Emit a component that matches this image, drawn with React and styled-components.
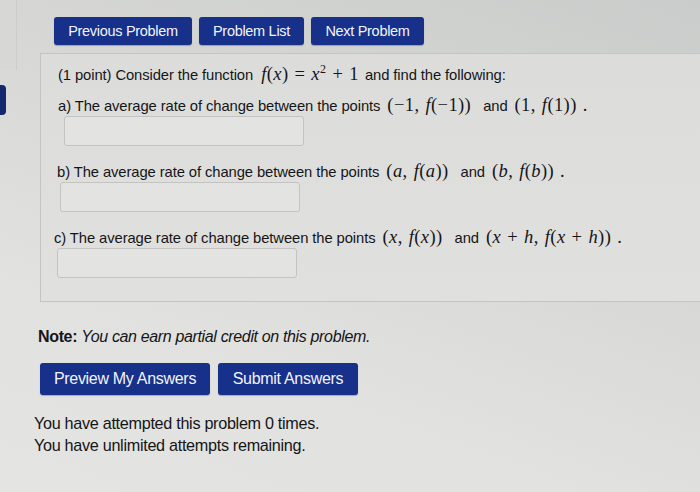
import React from 'react';
import styled, { createGlobalStyle } from 'styled-components';

const GlobalStyle = createGlobalStyle`
    html, body {
        margin: 0;
        padding: 0;
        height: 100%;
    }
    body {
        background: linear-gradient(200deg, #c9ccca 0%, #d6d7d5 35%, #e1e1df 70%, #e4e4e2 100%);
        font-family: "Liberation Sans", Arial, sans-serif;
        color: #151517;
        overflow: hidden;
    }
`;

const Page = styled.div`
    display: flex;
    width: 700px;
    height: 492px;
`;

const Rail = styled.div`
    width: 40px;
    flex: none;
    display: flex;
    flex-direction: column;
`;

const RailTop = styled.div`
    width: 16px;
    height: 70px;
    background: #d7d8d6;
    border-right: 1px solid #cbcccb;
`;

const RailTab = styled.div`
    margin-top: 15px;
    width: 6px;
    height: 30px;
    background: #13286e;
    border-radius: 0 4px 4px 0;
`;

const Main = styled.div`
    flex: 1;
    display: flex;
    flex-direction: column;
    min-width: 0;
`;

const NavRow = styled.div`
    display: flex;
    gap: 7px;
    margin: 17px 0 0 14px;
`;

const Button = styled.button`
    height: ${p => (p.big ? 32 : 28)}px;
    width: ${p => p.w}px;
    padding: 0;
    border: none;
    border-radius: 3px;
    background: #17308a;
    color: #f2f4fa;
    font-family: "Liberation Sans", Arial, sans-serif;
    font-size: ${p => (p.big ? 16 : 14.5)}px;
    letter-spacing: -0.3px;
    box-shadow: 0 1px 1px rgba(0, 0, 0, 0.25);
`;

const Panel = styled.div`
    margin-top: 8px;
    height: 249px;
    box-sizing: border-box;
    border: 1px solid #c4c5c3;
    border-right: none;
    background: linear-gradient(180deg, #dcdddb 0%, #e0e0de 100%);
    padding: 11px 0 0 17px;
`;

const Line = styled.div`
    font-size: 14.8px;
    line-height: 20px;
    letter-spacing: -0.1px;
    white-space: nowrap;
`;

const Part = styled.div`
    margin-top: ${p => p.top}px;
    margin-left: ${p => p.shift}px;
`;

const Math = styled.span`
    font-family: "Liberation Serif", "Times New Roman", serif;
    font-size: 18.5px;
    line-height: 18px;
    letter-spacing: 0.4px;
    word-spacing: 1px;
    margin: 0 ${p => (p.tight ? 6 : 12)}px 0 ${p => (p.tight ? 8 : 7)}px;
    i {
        font-style: italic;
    }
    sup {
        font-size: 12px;
        line-height: 0;
    }
`;

const Answer = styled.input`
    display: block;
    margin: 0 0 0 ${p => p.indent}px;
    width: 240px;
    height: 30px;
    box-sizing: border-box;
    border: 1px solid #c3c4c2;
    border-radius: 3px;
    background: #e3e3e1;
    outline: none;
`;

const Note = styled.div`
    margin: 26px 0 0 -2px;
    font-size: 16px;
    letter-spacing: -0.35px;
    b {
        font-weight: bold;
    }
    em {
        font-style: italic;
    }
`;

const ActionRow = styled.div`
    display: flex;
    gap: 8px;
    margin-top: 17px;
`;

const Attempts = styled.div`
    margin: 17px 0 0 -6px;
    font-size: 16.2px;
    line-height: 22px;
    letter-spacing: -0.3px;
`;

export default function App() {
    return (
        <>
            <GlobalStyle />
            <Page>
                <Rail>
                    <RailTop />
                    <RailTab />
                </Rail>
                <Main>
                    <NavRow>
                        <Button w={138}>Previous Problem</Button>
                        <Button w={105}>Problem List</Button>
                        <Button w={113}>Next Problem</Button>
                    </NavRow>
                    <Panel>
                        <Line>
                            (1 point) Consider the function
                            <Math tight>
                                <i>f</i>(<i>x</i>) = <i>x</i>
                                <sup>2</sup> + 1
                            </Math>
                            and find the following:
                        </Line>
                        <Part top={11} shift={0}>
                            <Line>
                                a) The average rate of change between the points
                                <Math>
                                    (−1, <i>f</i>(−1))
                                </Math>
                                and
                                <Math>
                                    (1, <i>f</i>(1)) .
                                </Math>
                            </Line>
                            <Answer indent={6} />
                        </Part>
                        <Part top={16} shift={-1}>
                            <Line>
                                b) The average rate of change between the points
                                <Math>
                                    (<i>a</i>, <i>f</i>(<i>a</i>))
                                </Math>
                                and
                                <Math>
                                    (<i>b</i>, <i>f</i>(<i>b</i>)) .
                                </Math>
                            </Line>
                            <Answer indent={3} />
                        </Part>
                        <Part top={16} shift={-4}>
                            <Line>
                                c) The average rate of change between the points
                                <Math>
                                    (<i>x</i>, <i>f</i>(<i>x</i>))
                                </Math>
                                and
                                <Math>
                                    (<i>x</i> + <i>h</i>, <i>f</i>(<i>x</i> + <i>h</i>)) .
                                </Math>
                            </Line>
                            <Answer indent={3} />
                        </Part>
                    </Panel>
                    <Note>
                        <b>Note:</b> <em>You can earn partial credit on this problem.</em>
                    </Note>
                    <ActionRow>
                        <Button big w={170}>Preview My Answers</Button>
                        <Button big w={140}>Submit Answers</Button>
                    </ActionRow>
                    <Attempts>
                        You have attempted this problem 0 times.
                        <br />
                        You have unlimited attempts remaining.
                    </Attempts>
                </Main>
            </Page>
        </>
    );
}
